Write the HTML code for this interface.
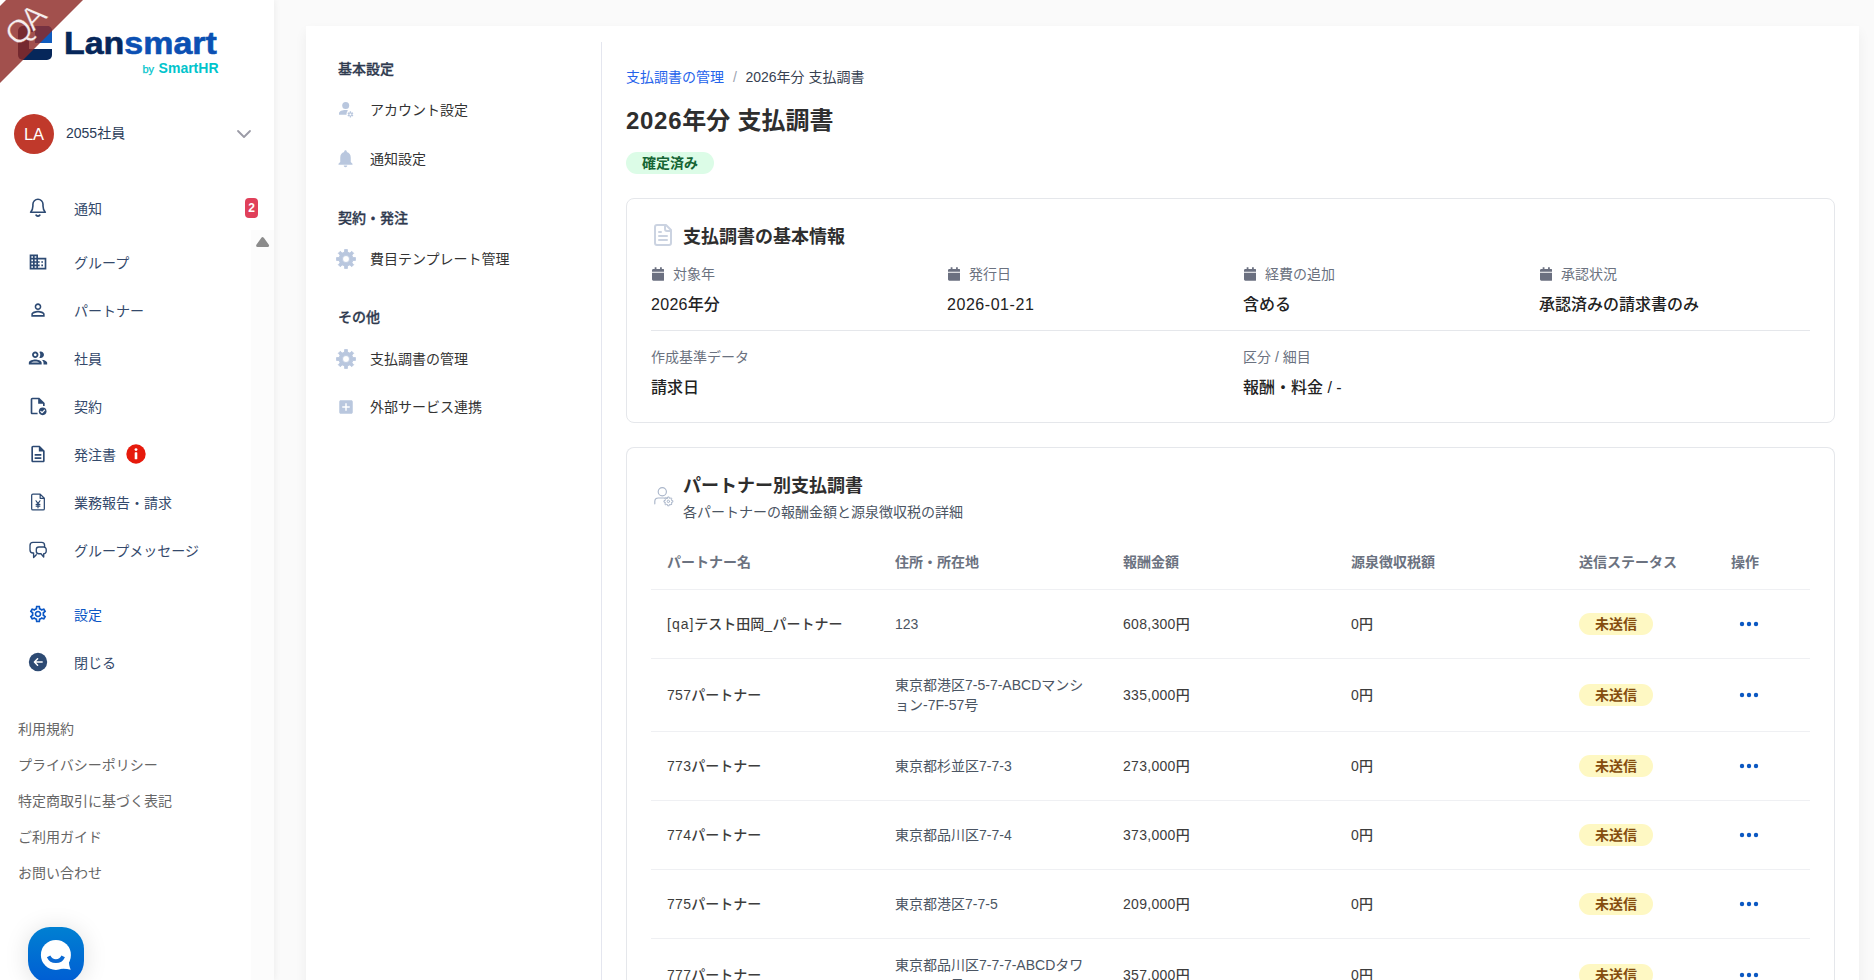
<!DOCTYPE html>
<html lang="ja">
<head>
<meta charset="utf-8">
<title>2026年分 支払調書</title>
<style>
*{box-sizing:border-box;margin:0;padding:0}
html,body{width:1874px;height:980px;overflow:hidden;background:#fafafa}
body{font-family:"Liberation Sans","Noto Sans CJK JP",sans-serif;font-size:14px;color:#333;position:relative}
.abs{position:absolute}
svg{display:block}
/* ---------- sidebar ---------- */
#side{position:absolute;left:0;top:0;width:274px;height:980px;background:#fff;box-shadow:1px 0 6px rgba(0,0,0,.055)}
#ribbon{position:absolute;left:0;top:0;width:100px;height:100px;z-index:5}
.logo-ico{position:absolute;left:18px;top:26px;width:34px;height:34px}
.logo-txt{position:absolute;left:63.500px;top:24px;font-weight:700;font-size:31px;line-height:40px;letter-spacing:0;color:#06275a;white-space:nowrap;-webkit-text-stroke:.6px currentColor;transform:scaleX(1.095);transform-origin:0 0}
.logo-txt b{color:#0b50b3}
.logo-sub{position:absolute;left:138px;top:60px;width:80.500px;text-align:right;font-weight:700;font-size:14px;line-height:16px;color:#00c4cc;white-space:nowrap}
.logo-sub i{font-style:normal;font-size:11px;font-weight:400;margin-right:4.500px;-webkit-text-stroke:.25px currentColor}
.avatar{position:absolute;left:14px;top:114px;width:40px;height:40px;border-radius:50%;background:#c0392b;color:#fff;font-size:16.500px;line-height:40px;text-align:center}
.uname{position:absolute;left:66px;top:123px;line-height:20px;font-size:14px;color:#2a3b57}
.nav{position:absolute;left:0;width:250px;height:24px}
.nav svg{position:absolute;left:28px;top:2px;width:20px;height:20px;fill:#2d4a73}
.nav span{position:absolute;left:74px;top:.500px;line-height:24px;font-size:14px;color:#34496b;white-space:nowrap}
.nav.on span{color:#0b57c5}
.nav.on svg{fill:#0b57c5}
.badge2{position:absolute;left:245px;top:198px;width:13px;height:20px;border-radius:4px;background:#e0405a;color:#fff;font-weight:700;font-size:12px;line-height:20px;text-align:center}
.foot{position:absolute;left:18px;margin-top:.700px;line-height:20px;font-size:14px;color:#666;white-space:nowrap}
.sbtrack{position:absolute;left:251px;top:230px;width:23px;height:750px;background:#fcfcfc}
.chat{position:absolute;left:28px;top:927px;width:56px;height:56px;border-radius:22px;background:linear-gradient(180deg,#0080d2,#005dd3);box-shadow:0 2px 24px rgba(0,0,0,.13)}
/* ---------- main ---------- */
#main{position:absolute;left:306px;top:26px;width:1553px;height:960px;background:#fff;box-shadow:0 6px 12px rgba(0,0,0,.055)}
.vline{position:absolute;left:295px;top:16px;width:1px;height:960px;background:#e4e6ef}
.sh{position:absolute;left:32px;margin-top:-.500px;line-height:20px;font-size:14px;font-weight:500;-webkit-text-stroke:.3px currentColor;color:#2f3a4f;white-space:nowrap}
.si{position:absolute;left:28px;width:240px;height:24px}
.si svg{position:absolute;left:0;top:0;width:24px;height:24px;fill:#b9c7de}
.si span{position:absolute;left:36px;top:-.500px;line-height:24px;font-size:14px;color:#333;white-space:nowrap}
/* content */
#ct{position:absolute;left:320px;top:0;width:1208px}
.bc{position:absolute;left:0;top:40.500px;line-height:20px;font-size:14px;color:#374151;white-space:nowrap}
.bc a{color:#2563eb;text-decoration:none}
.bc em{font-style:normal;color:#9ca3af;margin:0 8.500px 0 9px}
h1{word-spacing:.6px;position:absolute;left:0;top:77px;font-size:24px;line-height:36px;font-weight:700;color:#2e2e2e;white-space:nowrap}
.pill{position:absolute;left:0;top:126px;height:22px;padding:0 16px;border-radius:11px;background:#dcfce7;color:#166534;font-weight:700;font-size:14px;line-height:22px;white-space:nowrap}
.card{position:absolute;left:0;width:1209px;border:1px solid #e5e7eb;border-radius:8px;background:#fff}
.ctitle{position:absolute;left:56px;font-size:18px;line-height:28px;font-weight:700;color:#2e2e2e;white-space:nowrap}
.lbl{position:absolute;line-height:20px;font-size:14px;color:#6b7280;white-space:nowrap}
.lbl svg{position:absolute;left:.500px;top:3px;width:12.500px;height:14px;fill:#6b7080}
.lbl.ic{padding-left:22px}
.val{position:absolute;line-height:24px;font-size:16px;font-weight:500;color:#222;white-space:nowrap}
.hr{position:absolute;left:24px;width:1159px;height:1px;background:#e5e7eb}
/* table */
table{position:absolute;left:24px;top:85px;width:1159px;border-collapse:collapse;table-layout:fixed}
th{height:56px;padding:0 16px;text-align:left;font-size:14px;font-weight:700;color:#6b7280;border-bottom:1px solid #eff0f3;vertical-align:middle;white-space:nowrap}
td{height:69px;padding:16px;font-size:14px;line-height:20px;color:#4b5563;border-bottom:1px solid #eff0f3;vertical-align:middle}
td.m{font-weight:500;color:#3d3d3d}
.l{letter-spacing:.3px}
.st{display:inline-block;height:22px;padding:0 16px;border-radius:11px;background:#fef8c3;color:#854d0e;font-weight:700;font-size:14px;line-height:22px;vertical-align:middle}
.dots{display:block;width:36px;height:36px;padding:6px}
.dots svg{width:24px;height:24px;fill:#0b58c2}
</style>
</head>
<body>
<div id="side">
<div class="sbtrack"><svg class="abs" style="left:4px;top:6px" width="16" height="12" viewBox="0 0 16 12"><path d="M7.600 2.600 L12.600 9.600 H2.600 Z" fill="#8b8b8b" stroke="#8b8b8b" stroke-width="3" stroke-linejoin="round"/></svg></div>
<svg class="logo-ico" viewBox="0 0 34 34"><rect x="0" y="0" width="34" height="34" rx="5" fill="#06275a"/><path d="M17 0H29a5 5 0 0 1 5 5V17H17Z" fill="#0f5bbd"/><path d="M11 6H17V17H34V23H11Z" fill="#fff"/></svg>
<div class="logo-txt">Lan<b>smart</b></div>
<div class="logo-sub"><i>by</i>SmartHR</div>
<svg id="ribbon" viewBox="0 0 100 100"><polygon points="6,0 83,0 0,83 0,6" fill="#8e2a26" fill-opacity=".82"/><text x="0" y="0" transform="translate(24.500,25.500) rotate(-45)" text-anchor="middle" dominant-baseline="central" font-family="Liberation Sans, sans-serif" font-size="32" letter-spacing="-3" stroke="#9a4543" stroke-width=".35" fill="#fff" fill-opacity=".92">QA</text></svg>
<div class="avatar">LA</div>
<div class="uname">2055社員</div>
<svg class="abs" style="left:236px;top:128px" width="16" height="12" viewBox="0 0 16 12"><path d="M2 3 L8 9 L14 3" fill="none" stroke="#9b9ba6" stroke-width="1.800" stroke-linecap="round" stroke-linejoin="round"/></svg>

<div class="nav" style="top:196px"><svg viewBox="28 196 20 24" style="left:28px;top:.400px;width:20px;height:24px"><path d="M30.600 212.200C32.200 210.600 32.900 208.600 32.900 206V204.300A5.050 5.050 0 0 1 43 204.300V206C43 208.600 43.700 210.600 45.300 212.200Z" fill="none" stroke="#2d4a73" stroke-width="1.600" stroke-linejoin="round"/><path d="M36.100 215.100Q37.950 217.300 39.800 215.100" fill="none" stroke="#2d4a73" stroke-width="1.700" stroke-linecap="round"/></svg><span>通知</span></div>
<div class="badge2">2</div>
<div class="nav" style="top:250px"><svg viewBox="0 0 24 24"><path d="M12 7V3H2v18h20V7H12zM6 19H4v-2h2v2zm0-4H4v-2h2v2zm0-4H4V9h2v2zm0-4H4V5h2v2zm4 12H8v-2h2v2zm0-4H8v-2h2v2zm0-4H8V9h2v2zm0-4H8V5h2v2zm10 12h-8v-2h2v-2h-2v-2h2v-2h-2V9h8v10zm-2-8h-2v2h2v-2zm0 4h-2v2h2v-2z"/></svg><span>グループ</span></div>
<div class="nav" style="top:298px"><svg viewBox="0 0 24 24"><path d="M12 5.900c1.160 0 2.100.940 2.100 2.100s-.940 2.100-2.100 2.100S9.900 9.160 9.900 8s.940-2.100 2.100-2.100m0 9c2.970 0 6.100 1.460 6.100 2.100v1.100H5.900V17c0-.640 3.130-2.100 6.100-2.100M12 4C9.790 4 8 5.790 8 8s1.790 4 4 4 4-1.790 4-4-1.790-4-4-4zm0 9c-2.670 0-8 1.340-8 4v3h16v-3c0-2.660-5.330-4-8-4z"/></svg><span>パートナー</span></div>
<div class="nav" style="top:346px"><svg viewBox="0 0 24 24" style="left:27px;top:1px;width:22px;height:22px"><path d="M9 13.750c-2.340 0-7 1.170-7 3.500V19h14v-1.750c0-2.330-4.660-3.500-7-3.500zM4.340 17c.840-.580 2.870-1.250 4.660-1.250s3.820.670 4.660 1.250H4.340zM9 12c1.930 0 3.500-1.570 3.500-3.500S10.930 5 9 5 5.500 6.570 5.500 8.500 7.070 12 9 12zm0-5c.830 0 1.500.670 1.500 1.500S9.830 10 9 10s-1.500-.670-1.500-1.500S8.170 7 9 7zm7.040 6.810c1.160.840 1.960 1.960 1.960 3.440V19h4v-1.750c0-2.020-3.500-3.170-5.960-3.440zM15 12c1.930 0 3.500-1.570 3.500-3.500S16.930 5 15 5c-.540 0-1.040.130-1.500.350.630.890 1 1.980 1 3.150s-.370 2.260-1 3.150c.460.220.960.350 1.500.350z"/></svg><span>社員</span></div>
<div class="nav" style="top:394px"><svg viewBox="0 0 24 24"><path d="M13 2H5.200c-1.100 0-2 .9-2 2v16c0 1.100.9 2 2 2h6.300v-2H5.200V4h7v5.300H18V12h2V8.500L13.500 2z" /><circle cx="17.600" cy="18.400" r="4.600"/><path d="M15.300 18.500l1.600 1.600 3-3.100" fill="none" stroke="#fff" stroke-width="1.400" stroke-linecap="round" stroke-linejoin="round"/></svg><span>契約</span></div>
<div class="nav" style="top:442px"><svg viewBox="0 0 24 24"><path d="M8 16h8v2H8zm0-4h8v2H8zm6-10H6c-1.100 0-2 .9-2 2v16c0 1.100.890 2 1.990 2H18c1.100 0 2-.9 2-2V8l-6-6zm4 18H6V4h7v5h5v11z"/></svg><span>発注書</span></div>
<svg class="abs" style="left:126px;top:444px" width="20" height="20" viewBox="0 0 20 20"><circle cx="10" cy="10" r="9.700" fill="#e61a0c"/><circle cx="10" cy="5.600" r="1.450" fill="#fff"/><rect x="8.700" y="8.300" width="2.600" height="7" rx=".6" fill="#fff"/></svg>
<div class="nav" style="top:490px"><svg viewBox="0 0 24 24"><path d="M14.600 2.500H5.900c-.83 0-1.500.67-1.500 1.500v16c0 .83.67 1.500 1.500 1.500h12.200c.83 0 1.500-.67 1.500-1.500V7.500l-5-5zM14.600 2.500v5h5" fill="none" stroke="#2d4a73" stroke-width="1.500" stroke-linejoin="round"/><path d="M9.600 10.500l2.400 3.500 2.400-3.500M12 14v5M9.700 14.800h4.600M9.700 16.900h4.600" fill="none" stroke="#2d4a73" stroke-width="1.400" stroke-linecap="round" stroke-linejoin="round"/></svg><span>業務報告・請求</span></div>
<div class="nav" style="top:538px"><svg viewBox="28 540 20 20" fill="none" stroke="#2d4a73" stroke-width="1.350" stroke-linecap="round" stroke-linejoin="round"><path d="M44.600 546.500V545.400A3 3 0 0 0 41.600 542.400H33A3 3 0 0 0 30 545.400V550A3 3 0 0 0 33 553H33.600V557.500L36.300 554.700" fill="none"/><path d="M38.800 547H43.700A2.500 2.500 0 0 1 46.200 549.500V551.200A2.500 2.500 0 0 1 43.700 553.700V557L41 553.700H38.800A2.500 2.500 0 0 1 36.300 551.200V549.500A2.500 2.500 0 0 1 38.800 547Z" fill="none"/></svg><span>グループメッセージ</span></div>
<div class="nav on" style="top:602px"><svg viewBox="0 0 24 24"><path d="M19.430 12.980c.040-.320.070-.640.070-.980 0-.340-.030-.660-.070-.980l2.110-1.650c.190-.150.240-.420.120-.640l-2-3.460c-.090-.160-.260-.250-.440-.250-.060 0-.120.010-.170.030l-2.490 1c-.520-.400-1.080-.730-1.690-.980l-.380-2.650C14.460 2.180 14.250 2 14 2h-4c-.250 0-.460.180-.490.420l-.380 2.650c-.610.250-1.170.590-1.690.980l-2.490-1c-.060-.020-.120-.030-.180-.030-.170 0-.340.090-.430.250l-2 3.460c-.130.220-.070.490.120.640l2.110 1.650c-.040.320-.070.650-.070.980 0 .330.030.660.070.980l-2.110 1.650c-.190.150-.240.420-.120.640l2 3.460c.090.160.260.250.440.250.060 0 .120-.010.170-.030l2.490-1c.520.400 1.080.730 1.690.980l.380 2.650c.030.240.240.420.490.420h4c.250 0 .460-.180.490-.420l.380-2.650c.610-.250 1.170-.590 1.690-.980l2.490 1c.060.020.120.030.180.030.170 0 .340-.090.430-.250l2-3.460c.120-.220.070-.490-.120-.640l-2.110-1.650zm-1.980-1.710c.040.310.050.520.050.730 0 .210-.020.430-.050.730l-.140 1.130.890.700 1.080.840-.700 1.210-1.270-.510-1.040-.420-.900.680c-.430.320-.840.560-1.250.730l-1.060.430-.160 1.130-.200 1.350h-1.400l-.190-1.350-.160-1.130-1.060-.430c-.430-.180-.830-.410-1.230-.710l-.910-.700-1.060.430-1.270.510-.700-1.210 1.080-.840.890-.700-.140-1.130c-.030-.310-.050-.540-.050-.740s.020-.430.050-.730l.140-1.130-.890-.700-1.080-.840.700-1.210 1.270.510 1.040.420.900-.680c.430-.320.840-.560 1.250-.730l1.060-.430.160-1.130.200-1.350h1.390l.190 1.350.160 1.130 1.060.430c.430.180.830.410 1.230.710l.910.700 1.060-.430 1.270-.510.700 1.210-1.070.850-.890.700.140 1.130zM12 8c-2.210 0-4 1.790-4 4s1.790 4 4 4 4-1.790 4-4-1.790-4-4-4zm0 6c-1.100 0-2-.900-2-2s.900-2 2-2 2 .900 2 2-.900 2-2 2z"/></svg><span>設定</span></div>
<div class="nav" style="top:650px"><svg viewBox="0 0 24 24"><circle cx="12" cy="12" r="11" /><path d="M17 12H8M11.500 8.200L7.700 12l3.800 3.800" fill="none" stroke="#fff" stroke-width="1.800" stroke-linecap="round" stroke-linejoin="round"/></svg><span>閉じる</span></div>

<div class="foot" style="top:718px">利用規約</div>
<div class="foot" style="top:754px">プライバシーポリシー</div>
<div class="foot" style="top:790px">特定商取引に基づく表記</div>
<div class="foot" style="top:826px">ご利用ガイド</div>
<div class="foot" style="top:862px">お問い合わせ</div>
<div class="chat"><svg class="abs" style="left:0;top:0" width="56" height="56" viewBox="28 927 56 56"><circle cx="55.900" cy="954.900" r="15" fill="#fff"/><path d="M69.200 960.500C68.700 963.500 69.400 966.500 70.700 969.700C67.500 969 64.500 968.300 61 968.800Z" fill="#fff"/><path d="M48.600 956.400A8 8 0 0 0 63.200 956.400" fill="none" stroke="#0a69d3" stroke-width="3.800"/></svg></div>
</div>
<div id="main">
<div class="vline"></div>
<div class="sh" style="top:33px">基本設定</div>
<div class="si" style="top:72px"><svg viewBox="334 98 24 24"><circle cx="345.700" cy="105.400" r="3.500"/><path d="M339 114.800V113.400C339 111.300 342.600 110.100 345.400 110.100C346.300 110.100 347.200 110.250 348.050 110.500C347.100 111.500 346.500 112.900 346.500 114.400L346.520 114.800Z"/><path fill-rule="evenodd" d="M349.630 112.450L349.760 111.370L351.040 111.370L351.170 112.450L351.700 112.750L352.700 112.330L353.350 113.440L352.480 114.090L352.480 114.710L353.350 115.360L352.700 116.470L351.700 116.050L351.170 116.350L351.040 117.430L349.760 117.430L349.630 116.350L349.100 116.050L348.100 116.470L347.450 115.360L348.320 114.710L348.320 114.090L347.450 113.440L348.100 112.330L349.100 112.750ZM350.400 113.400a1 1 0 1 0 0 2a1 1 0 1 0 0-2Z"/></svg><span>アカウント設定</span></div>
<div class="si" style="top:121px"><svg viewBox="0 0 24 24" style="left:1.400px;top:1.300px;width:21px;height:21px"><path d="M12 22c1.100 0 2-.9 2-2h-4c0 1.100.890 2 2 2zm6-6v-5c0-3.070-1.640-5.640-4.500-6.320V4c0-.830-.670-1.500-1.500-1.500s-1.500.670-1.500 1.500v.680C7.630 5.360 6 7.920 6 11v5l-2 2v1h16v-1l-2-2z"/></svg><span>通知設定</span></div>
<div class="sh" style="top:182px">契約・発注</div>
<div class="si" style="top:221px"><svg viewBox="0 0 24 24"><path fill-rule="evenodd" stroke="#b9c7de" stroke-width=".8" stroke-linejoin="round" d="M10.51 5.06L10.57 2.51L13.43 2.51L13.49 5.06L15.85 6.04L17.70 4.28L19.72 6.30L17.96 8.15L18.94 10.51L21.49 10.57L21.49 13.43L18.94 13.49L17.96 15.85L19.72 17.70L17.70 19.72L15.85 17.96L13.49 18.94L13.43 21.49L10.57 21.49L10.51 18.94L8.15 17.96L6.30 19.72L4.28 17.70L6.04 15.85L5.06 13.49L2.51 13.43L2.51 10.57L5.06 10.51L6.04 8.15L4.28 6.30L6.30 4.28L8.15 6.04ZM12 8.500a3.500 3.500 0 1 0 0 7a3.500 3.500 0 1 0 0-7Z"/></svg><span>費目テンプレート管理</span></div>
<div class="sh" style="top:281px">その他</div>
<div class="si" style="top:321px"><svg viewBox="0 0 24 24"><path fill-rule="evenodd" stroke="#b9c7de" stroke-width=".8" stroke-linejoin="round" d="M10.51 5.06L10.57 2.51L13.43 2.51L13.49 5.06L15.85 6.04L17.70 4.28L19.72 6.30L17.96 8.15L18.94 10.51L21.49 10.57L21.49 13.43L18.94 13.49L17.96 15.85L19.72 17.70L17.70 19.72L15.85 17.96L13.49 18.94L13.43 21.49L10.57 21.49L10.51 18.94L8.15 17.96L6.30 19.72L4.28 17.70L6.04 15.85L5.06 13.49L2.51 13.43L2.51 10.57L5.06 10.51L6.04 8.15L4.28 6.30L6.30 4.28L8.15 6.04ZM12 8.500a3.500 3.500 0 1 0 0 7a3.500 3.500 0 1 0 0-7Z"/></svg><span>支払調書の管理</span></div>
<div class="si" style="top:369px"><svg viewBox="0 0 24 24" style="left:3px;top:3px;width:18px;height:18px"><path d="M19 3H5c-1.110 0-2 .9-2 2v14c0 1.100.890 2 2 2h14c1.100 0 2-.9 2-2V5c0-1.100-.9-2-2-2zm-2 10h-4v4h-2v-4H7v-2h4V7h2v4h4v2z"/></svg><span>外部サービス連携</span></div>

<div id="ct">
<div class="bc"><a>支払調書の管理</a><em>/</em>2026年分 支払調書</div>
<h1><span style="letter-spacing:.7px">2026</span>年分 支払調書</h1>
<div class="pill">確定済み</div>

<div class="card" style="top:172px;height:225px">
<svg class="abs" style="left:24px;top:24px" width="24" height="24" viewBox="0 0 24 24" fill="none" stroke="#cbd3e1" stroke-width="2" stroke-linecap="round" stroke-linejoin="round"><path d="M15 2H6a2 2 0 0 0-2 2v16a2 2 0 0 0 2 2h12a2 2 0 0 0 2-2V7Z"/><path d="M14 2v4a2 2 0 0 0 2 2h4"/><path d="M10 9H8"/><path d="M16 13H8"/><path d="M16 17H8"/></svg>
<div class="ctitle" style="top:24px">支払調書の基本情報</div>
<div class="lbl ic" style="left:24px;top:65px"><svg viewBox="0 0 14 15"><path d="M3 0h2v2h4V0h2v2h1.500C13.300 2 14 2.700 14 3.500V5H0V3.500C0 2.700.7 2 1.500 2H3zM0 6h14v7.500c0 .8-.7 1.500-1.500 1.500h-11C.7 15 0 14.300 0 13.500z"/></svg>対象年</div>
<div class="val" style="left:24px;top:94px"><span class="l">2026</span>年分</div>
<div class="lbl ic" style="left:320px;top:65px"><svg viewBox="0 0 14 15"><path d="M3 0h2v2h4V0h2v2h1.500C13.300 2 14 2.700 14 3.500V5H0V3.500C0 2.700.7 2 1.500 2H3zM0 6h14v7.500c0 .8-.7 1.500-1.500 1.500h-11C.7 15 0 14.300 0 13.500z"/></svg>発行日</div>
<div class="val" style="left:320px;top:94px"><span class="l" style="letter-spacing:.55px">2026-01-21</span></div>
<div class="lbl ic" style="left:616px;top:65px"><svg viewBox="0 0 14 15"><path d="M3 0h2v2h4V0h2v2h1.500C13.300 2 14 2.700 14 3.500V5H0V3.500C0 2.700.7 2 1.500 2H3zM0 6h14v7.500c0 .8-.7 1.500-1.500 1.500h-11C.7 15 0 14.300 0 13.500z"/></svg>経費の追加</div>
<div class="val" style="left:616px;top:94px">含める</div>
<div class="lbl ic" style="left:912px;top:65px"><svg viewBox="0 0 14 15"><path d="M3 0h2v2h4V0h2v2h1.500C13.300 2 14 2.700 14 3.500V5H0V3.500C0 2.700.7 2 1.500 2H3zM0 6h14v7.500c0 .8-.7 1.500-1.500 1.500h-11C.7 15 0 14.300 0 13.500z"/></svg>承認状況</div>
<div class="val" style="left:912px;top:94px">承認済みの請求書のみ</div>
<div class="hr" style="top:131px"></div>
<div class="lbl" style="left:24px;top:148px">作成基準データ</div>
<div class="val" style="left:24px;top:177px">請求日</div>
<div class="lbl" style="left:616px;top:148px">区分 / 細目</div>
<div class="val" style="left:616px;top:177px">報酬・料金 / -</div>
</div>

<div class="card" style="top:421px;height:560px;border-bottom:0;border-radius:8px 8px 0 0">
<svg class="abs" style="left:24px;top:36px" width="24" height="24" viewBox="650 483 24 24" fill="none" stroke="#aab6ca" stroke-width="1.150" stroke-linecap="round" stroke-linejoin="round"><circle cx="661.300" cy="490.700" r="4.100"/><path d="M653.800 502.800V500.500A3.500 3.500 0 0 1 657.300 497H665.600"/><path d="M666.530 497.220L666.630 495.970L668.170 495.970L668.270 497.220L669.040 497.530L669.990 496.720L671.080 497.810L670.270 498.760L670.580 499.530L671.830 499.630L671.830 501.170L670.580 501.270L670.270 502.040L671.080 502.990L669.990 504.080L669.040 503.270L668.270 503.580L668.170 504.830L666.630 504.830L666.530 503.580L665.760 503.270L664.810 504.080L663.720 502.990L664.530 502.040L664.220 501.270L662.970 501.170L662.970 499.630L664.220 499.530L664.530 498.760L663.720 497.810L664.810 496.720L665.760 497.530Z" stroke-width="1"/><circle cx="667.400" cy="500.400" r="1.200" stroke-width="1"/></svg>
<div class="ctitle" style="top:24px">パートナー別支払調書</div>
<div class="lbl" style="left:56px;top:54px;color:#4b5563">各パートナーの報酬金額と源泉徴収税の詳細</div>
<table>
<colgroup><col style="width:228px"><col style="width:228px"><col style="width:228px"><col style="width:228px"><col style="width:152px"><col></colgroup>
<thead><tr><th>パートナー名</th><th>住所・所在地</th><th>報酬金額</th><th>源泉徴収税額</th><th>送信ステータス</th><th>操作</th></tr></thead>
<tbody>
<tr><td class="m"><span class="l" style="letter-spacing:1px">[qa]</span>テスト田岡<span class="l">_</span>パートナー</td><td>123</td><td class="m"><span class="l">608,300</span>円</td><td class="m"><span class="l">0</span>円</td><td><span class="st">未送信</span></td><td><span class="dots"><svg viewBox="0 0 24 24"><circle cx="5" cy="12" r="2.200"/><circle cx="12" cy="12" r="2.200"/><circle cx="19" cy="12" r="2.200"/></svg></span></td></tr>
<tr><td class="m"><span class="l">757</span>パートナー</td><td>東京都港区7-5-7-ABCDマンション-7F-57号</td><td class="m"><span class="l">335,000</span>円</td><td class="m"><span class="l">0</span>円</td><td><span class="st">未送信</span></td><td><span class="dots"><svg viewBox="0 0 24 24"><circle cx="5" cy="12" r="2.200"/><circle cx="12" cy="12" r="2.200"/><circle cx="19" cy="12" r="2.200"/></svg></span></td></tr>
<tr><td class="m"><span class="l">773</span>パートナー</td><td>東京都杉並区7-7-3</td><td class="m"><span class="l">273,000</span>円</td><td class="m"><span class="l">0</span>円</td><td><span class="st">未送信</span></td><td><span class="dots"><svg viewBox="0 0 24 24"><circle cx="5" cy="12" r="2.200"/><circle cx="12" cy="12" r="2.200"/><circle cx="19" cy="12" r="2.200"/></svg></span></td></tr>
<tr><td class="m"><span class="l">774</span>パートナー</td><td>東京都品川区7-7-4</td><td class="m"><span class="l">373,000</span>円</td><td class="m"><span class="l">0</span>円</td><td><span class="st">未送信</span></td><td><span class="dots"><svg viewBox="0 0 24 24"><circle cx="5" cy="12" r="2.200"/><circle cx="12" cy="12" r="2.200"/><circle cx="19" cy="12" r="2.200"/></svg></span></td></tr>
<tr><td class="m"><span class="l">775</span>パートナー</td><td>東京都港区7-7-5</td><td class="m"><span class="l">209,000</span>円</td><td class="m"><span class="l">0</span>円</td><td><span class="st">未送信</span></td><td><span class="dots"><svg viewBox="0 0 24 24"><circle cx="5" cy="12" r="2.200"/><circle cx="12" cy="12" r="2.200"/><circle cx="19" cy="12" r="2.200"/></svg></span></td></tr>
<tr><td class="m"><span class="l">777</span>パートナー</td><td>東京都品川区7-7-7-ABCDタワー-77F-7号</td><td class="m"><span class="l">357,000</span>円</td><td class="m"><span class="l">0</span>円</td><td><span class="st">未送信</span></td><td><span class="dots"><svg viewBox="0 0 24 24"><circle cx="5" cy="12" r="2.200"/><circle cx="12" cy="12" r="2.200"/><circle cx="19" cy="12" r="2.200"/></svg></span></td></tr>
</tbody>
</table>
</div>
</div>
</div>
</body>
</html>
